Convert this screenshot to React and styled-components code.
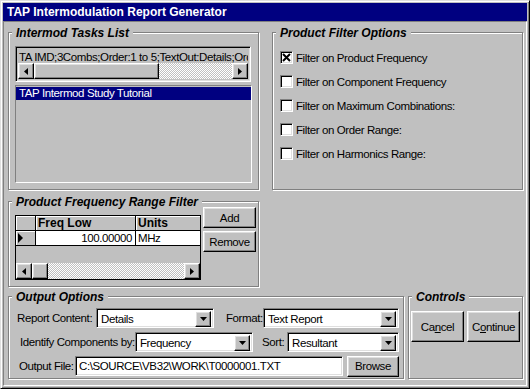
import React from 'react';
import styled, { createGlobalStyle, css } from 'styled-components';

const GlobalStyle = createGlobalStyle`
  html, body { margin: 0; padding: 0; background: #c0c0c0; }
  body {
    font-family: "Liberation Sans", Arial, sans-serif;
    font-size: 11.5px;
    letter-spacing: -0.4px;
    color: #000;
  }
  * { box-sizing: border-box; }
`;

const raised = css`
  border: 1px solid;
  border-color: #fff #000 #000 #fff;
  box-shadow: inset -1px -1px #808080, inset 1px 1px #dfdfdf;
  background: #c0c0c0;
`;

const sunken = css`
  border: 1px solid;
  border-color: #808080 #fff #fff #808080;
  box-shadow: inset 1px 1px #000, inset -1px -1px #dfdfdf;
`;

const App = () => {
  return (
    <>
      <GlobalStyle />
      <Window>
        <TitleBar>TAP Intermodulation Report Generator</TitleBar>
        <Client>
          <TopArea>
            <Column>
              <Frame $w={251} $h={158} $pad="13px 0 0 6px">
                <Legend>Intermod Tasks List</Legend>
                <TasksBox>
                  <TasksText>TA IMD;3Combs;Order:1 to 5;TextOut:Details;Ordered</TasksText>
                  <HScroll thumb={125} />
                </TasksBox>
                <ListBox>
                  <ListItem $selected>TAP Intermod Study Tutorial</ListItem>
                </ListBox>
              </Frame>

              <Frame $w={251} $h={86} $pad="5px 0 0 6px">
                <Legend>Product Frequency Range Filter</Legend>
                <RangeRow>
                  <DataGrid>
                    <GridRow>
                      <HeadCell />
                      <HeadCell>Freq Low</HeadCell>
                      <HeadCell $last>Units</HeadCell>
                    </GridRow>
                    <GridRow>
                      <SelectorCell>
                        <svg width="6" height="10" viewBox="0 0 6 10">
                          <polygon points="0,0 5,5 0,10" fill="#000" />
                        </svg>
                      </SelectorCell>
                      <DataCell $align="right">100.00000</DataCell>
                      <DataCell $last>MHz</DataCell>
                    </GridRow>
                    <GridScroll>
                      <HScroll thumb={16} />
                    </GridScroll>
                  </DataGrid>
                  <ButtonStack>
                    <Button $w={53} $h={21}>Add</Button>
                    <Button $w={53} $h={21}>Remove</Button>
                  </ButtonStack>
                </RangeRow>
              </Frame>
            </Column>

            <Frame $w={251} $h={158} $pad="18px 0 0 7px">
              <Legend>Product Filter Options</Legend>
              <CheckList>
                <CheckRow checked label="Filter on Product Frequency" />
                <CheckRow label="Filter on Component Frequency" />
                <CheckRow label="Filter on Maximum Combinations:" />
                <CheckRow label="Filter on Order Range:" />
                <CheckRow label="Filter on Harmonics Range:" />
              </CheckList>
            </Frame>
          </TopArea>

          <BottomArea>
            <Frame $w={396} $h={83} $pad="11px 0 0 0">
              <Legend>Output Options</Legend>
              <FormRows>
                <FormRow>
                  <FieldLabel $w={87} $pl={8}>Report Content:</FieldLabel>
                  <Combo $w={118} value="Details" />
                  <FieldLabel $w={49} $pl={12}>Format:</FieldLabel>
                  <Combo $w={136} value="Text Report" />
                </FormRow>
                <FormRow>
                  <FieldLabel $w={126} $pl={11}>Identify Components by:</FieldLabel>
                  <Combo $w={118} value="Frequency" />
                  <FieldLabel $w={34} $pl={9}>Sort:</FieldLabel>
                  <Combo $w={112} value="Resultant" />
                </FormRow>
                <FormRow>
                  <FieldLabel $w={66} $pl={10}>Output File:</FieldLabel>
                  <TextInput>C:\SOURCE\VB32\WORK\T0000001.TXT</TextInput>
                  <Button $w={52} $h={21} $ml={4}>Browse</Button>
                </FormRow>
              </FormRows>
            </Frame>

            <Frame $w={115} $h={83} $pad="14px 0 0 2px">
              <Legend>Controls</Legend>
              <ControlButtons>
                <Button $w={53} $h={31}>Ca<u>n</u>cel</Button>
                <Button $w={53} $h={31}>C<u>o</u>ntinue</Button>
              </ControlButtons>
            </Frame>
          </BottomArea>
        </Client>
      </Window>
    </>
  );
};

const Arrow = ({ dir }) => (
  <ArrowButton>
    <svg width="4" height="7" viewBox="0 0 4 7">
      {dir === 'left' ? (
        <polygon points="4,0 0,3.5 4,7" fill="#000" />
      ) : (
        <polygon points="0,0 4,3.5 0,7" fill="#000" />
      )}
    </svg>
  </ArrowButton>
);

const HScroll = ({ thumb }) => (
  <ScrollBar>
    <Arrow dir="left" />
    <Track>
      <Thumb style={{ width: thumb }} />
    </Track>
    <Arrow dir="right" />
  </ScrollBar>
);

const CheckRow = ({ checked, label }) => (
  <CheckLine>
    <CheckBox>
      {checked && (
        <svg width="9" height="9" viewBox="0 0 9 9">
          <path d="M1 1 L8 8 M8 1 L1 8" stroke="#000" strokeWidth="2" />
        </svg>
      )}
    </CheckBox>
    <span>{label}</span>
  </CheckLine>
);

const Combo = ({ $w, value }) => (
  <ComboBox $w={$w}>
    <ComboText>{value}</ComboText>
    <DropButton>
      <svg width="7" height="4" viewBox="0 0 7 4">
        <polygon points="0,0 7,0 3.5,4" fill="#000" />
      </svg>
    </DropButton>
  </ComboBox>
);

const Window = styled.div`
  width: 530px;
  height: 389px;
  display: flex;
  flex-direction: column;
  padding: 2px;
  border: 1px solid;
  border-color: #dfdfdf #000 #000 #dfdfdf;
  box-shadow: inset 1px 1px #fff, inset -1px -1px #808080;
  background: #c0c0c0;
`;

const TitleBar = styled.div`
  height: 18px;
  padding-left: 4px;
  display: flex;
  align-items: center;
  background: #000080;
  color: #fff;
  font: bold 12px "Liberation Sans", Arial, sans-serif;
  letter-spacing: 0;
`;

const Client = styled.div`
  flex: 1;
  display: flex;
  flex-direction: column;
  gap: 9px;
  padding: 10px 0 0 4px;
  border: 1px solid;
  border-color: #808080 #fff #fff #808080;
`;

const TopArea = styled.div`
  display: flex;
  gap: 13px;
  align-items: flex-start;
`;

const Column = styled.div`
  display: flex;
  flex-direction: column;
  gap: 11px;
`;

const BottomArea = styled.div`
  display: flex;
  gap: 4px;
`;

const Frame = styled.div`
  position: relative;
  width: ${({ $w }) => $w}px;
  height: ${({ $h }) => $h}px;
  padding: ${({ $pad }) => $pad};
  border: 1px solid #808080;
  box-shadow: inset 1px 1px #fff, 1px 1px #fff;
`;

const Legend = styled.span`
  position: absolute;
  top: -7px;
  left: 3px;
  padding: 0 4px;
  background: #c0c0c0;
  font: italic bold 12px/14px "Liberation Sans", Arial, sans-serif;
  letter-spacing: 0;
  white-space: nowrap;
`;

const TasksBox = styled.div`
  ${sunken};
  width: 236px;
  height: 36px;
  padding: 2px;
  display: flex;
  flex-direction: column;
  background: #c0c0c0;
`;

const TasksText = styled.div`
  height: 16px;
  padding-left: 1px;
  line-height: 16px;
  white-space: nowrap;
  overflow: hidden;
`;

const ScrollBar = styled.div`
  height: 16px;
  display: flex;
`;

const ArrowButton = styled.div`
  ${raised};
  width: 16px;
  height: 16px;
  flex: none;
  display: flex;
  align-items: center;
  justify-content: center;
`;

const Track = styled.div`
  flex: 1;
  display: flex;
  background-image: conic-gradient(#fff 25%, #c0c0c0 0 50%, #fff 0 75%, #c0c0c0 0);
  background-size: 2px 2px;
`;

const Thumb = styled.div`
  ${raised};
  height: 16px;
`;

const ListBox = styled.div`
  width: 237px;
  height: 98px;
  margin-top: 3px;
  padding: 1px 0;
  border: 1px solid;
  border-color: #808080 #fff #fff #808080;
`;

const ListItem = styled.div`
  height: 13px;
  padding-left: 3px;
  line-height: 13px;
  background: ${({ $selected }) => ($selected ? '#000080' : 'transparent')};
  color: ${({ $selected }) => ($selected ? '#fff' : '#000')};
`;

const RangeRow = styled.div`
  display: flex;
  gap: 2px;
  align-items: flex-start;
`;

const DataGrid = styled.div`
  width: 186px;
  height: 65px;
  margin-top: 8px;
  display: flex;
  flex-direction: column;
  border: 1px solid #000;
`;

const GridRow = styled.div`
  display: grid;
  grid-template-columns: 20px 100px 1fr;
  height: 15px;
  border-bottom: 1px solid #000;
`;

const HeadCell = styled.div`
  border-right: ${({ $last }) => ($last ? 'none' : '1px solid #000')};
  box-shadow: inset 1px 1px #fff;
  padding-left: 2px;
  font: bold 12px/14px "Liberation Sans", Arial, sans-serif;
  letter-spacing: 0;
`;

const SelectorCell = styled.div`
  border-right: 1px solid #000;
  box-shadow: inset 1px 1px #fff;
  display: flex;
  align-items: center;
  padding-left: 2px;
`;

const DataCell = styled.div`
  background: #fff;
  border-right: ${({ $last }) => ($last ? 'none' : '1px solid #000')};
  text-align: ${({ $align }) => $align || 'left'};
  padding: 0 3px 0 2px;
  line-height: 14px;
`;

const GridScroll = styled.div`
  margin-top: auto;
`;

const ButtonStack = styled.div`
  display: flex;
  flex-direction: column;
  gap: 3px;
`;

const Button = styled.div`
  ${raised};
  width: ${({ $w }) => $w}px;
  height: ${({ $h }) => $h}px;
  margin-left: ${({ $ml }) => $ml || 0}px;
  display: flex;
  align-items: center;
  justify-content: center;
  flex: none;
  u { text-decoration: underline; }
`;

const CheckList = styled.div`
  display: flex;
  flex-direction: column;
  gap: 11px;
`;

const CheckLine = styled.div`
  height: 13px;
  display: flex;
  align-items: center;
  gap: 3px;
  white-space: nowrap;
`;

const CheckBox = styled.div`
  ${sunken};
  width: 13px;
  height: 13px;
  flex: none;
  padding: 1px;
  display: flex;
  align-items: center;
  justify-content: center;
  background: #fff;
`;

const FormRows = styled.div`
  display: flex;
  flex-direction: column;
  gap: 4px;
`;

const FormRow = styled.div`
  display: flex;
  align-items: center;
  height: 20px;
`;

const FieldLabel = styled.span`
  width: ${({ $w }) => $w}px;
  padding-left: ${({ $pl }) => $pl}px;
  flex: none;
  white-space: nowrap;
`;

const ComboBox = styled.div`
  ${sunken};
  width: ${({ $w }) => $w}px;
  height: 20px;
  flex: none;
  padding: 2px;
  display: flex;
  background: #fff;
`;

const ComboText = styled.span`
  flex: 1;
  padding-left: 2px;
  line-height: 16px;
  white-space: nowrap;
  overflow: hidden;
`;

const DropButton = styled.div`
  ${raised};
  width: 16px;
  height: 16px;
  display: flex;
  align-items: center;
  justify-content: center;
`;

const TextInput = styled.div`
  ${sunken};
  width: 268px;
  height: 20px;
  flex: none;
  padding: 0 3px;
  background: #fff;
  line-height: 18px;
  white-space: nowrap;
  overflow: hidden;
`;

const ControlButtons = styled.div`
  display: flex;
  gap: 3px;
`;

export default App;
